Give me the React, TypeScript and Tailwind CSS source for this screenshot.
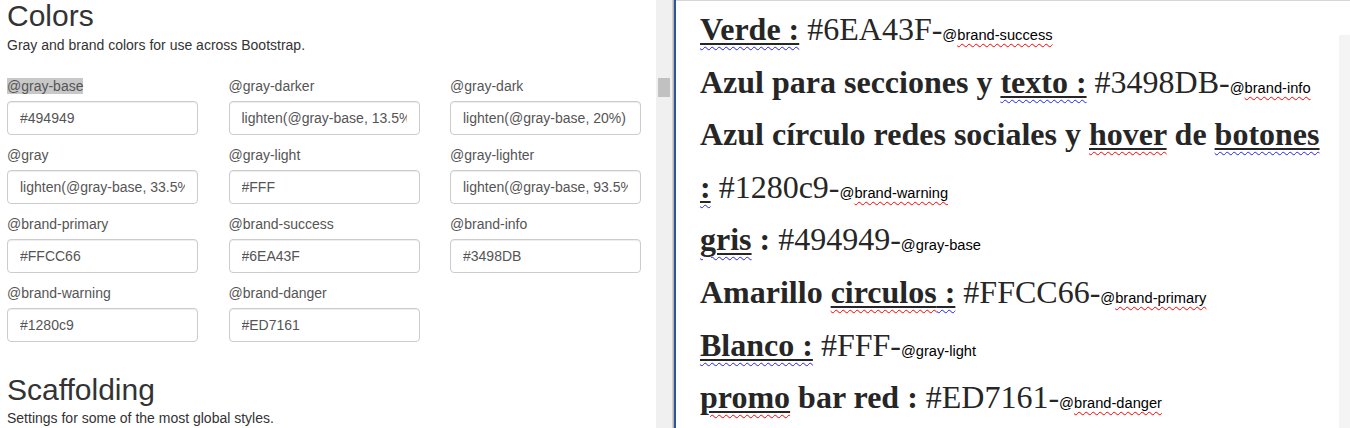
import React from "react";

type Field = { label: string; value: string; selected?: boolean };

const fields: Field[] = [
  { label: "@gray-base", value: "#494949", selected: true },
  { label: "@gray-darker", value: "lighten(@gray-base, 13.5%)" },
  { label: "@gray-dark", value: "lighten(@gray-base, 20%)" },
  { label: "@gray", value: "lighten(@gray-base, 33.5%)" },
  { label: "@gray-light", value: "#FFF" },
  { label: "@gray-lighter", value: "lighten(@gray-base, 93.5%)" },
  { label: "@brand-primary", value: "#FFCC66" },
  { label: "@brand-success", value: "#6EA43F" },
  { label: "@brand-info", value: "#3498DB" },
  { label: "@brand-warning", value: "#1280c9" },
  { label: "@brand-danger", value: "#ED7161" },
];

// solid underline (word's underline)
const U = ({ children }: { children: React.ReactNode }) => (
  <span className="underline decoration-solid decoration-[#262626] decoration-[1.5px] underline-offset-[3px]">
    {children}
  </span>
);

// spell-check squiggles
const Red = ({ children }: { children: React.ReactNode }) => (
  <span className="underline decoration-wavy decoration-[#ff0000] decoration-1 underline-offset-[6px]">
    {children}
  </span>
);

const Blue = ({ children }: { children: React.ReactNode }) => (
  <span className="underline decoration-wavy decoration-[#2020ff] decoration-1 underline-offset-[6px]">
    {children}
  </span>
);

const Small = ({ children }: { children: React.ReactNode }) => (
  <span className="text-[14.67px] leading-none text-black font-normal font-['Liberation_Sans',Arial,sans-serif]">
    {children}
  </span>
);

const SmallRed = ({ children }: { children: React.ReactNode }) => (
  <span className="underline decoration-wavy decoration-[#ff0000] decoration-1 underline-offset-[3px]">
    {children}
  </span>
);

const FormField = ({ field }: { field: Field }) => (
  <div className="mb-[10px]">
    <div className="h-[20px] leading-[20px] text-[14px] text-[#555]">
      <span className={field.selected ? "bg-[#c8c8c8]" : ""}>{field.label}</span>
    </div>
    <input
      readOnly
      defaultValue={field.value}
      className="mt-[5px] block w-full h-[34px] px-3 py-[6px] text-[14px] leading-[20px] text-[#555] bg-white border border-[#ccc] rounded-[4px] shadow-[inset_0_1px_1px_rgba(0,0,0,0.075)] outline-none"
    />
  </div>
);

const Customizer = () => (
  <div className="w-[656px] shrink-0 pl-[7px] font-['Liberation_Sans',Arial,sans-serif] text-[#333]">
    <h1 className="mt-[-1px] text-[30px] leading-[33px] font-normal">Colors</h1>
    <p className="mt-[3px] text-[14px] leading-[20px]">Gray and brand colors for use across Bootstrap.</p>
    <div className="mt-[21px] grid grid-cols-[191px_191px_191px] gap-x-[30.5px]">
      {fields.map((f) => (
        <FormField key={f.label} field={f} />
      ))}
    </div>
    <h1 className="mt-[21px] text-[30px] leading-[33px] font-normal">Scaffolding</h1>
    <p className="mt-[2px] text-[14px] leading-[20px]">Settings for some of the most global styles.</p>
  </div>
);

const WordDoc = () => (
  <div className="flex-1 border-t border-[#d6d6d6] bg-white pl-[24px] pt-[2px] font-['Liberation_Serif','Times_New_Roman',serif] text-[32px] leading-[52.6px] text-[#262626] whitespace-nowrap">
    <p>
      <b><Blue><U>Verde :</U></Blue></b> #6EA43F-<Small>@<SmallRed>brand-success</SmallRed></Small>
    </p>
    <p>
      <b>Azul para secciones y <Blue><U>texto :</U></Blue></b> #3498DB-<Small>@<SmallRed>brand-info</SmallRed></Small>
    </p>
    <p>
      <b>
        Azul círculo redes sociales y <Red><U>hover</U></Red> de <Blue><U>botones </U></Blue>
      </b>
    </p>
    <p>
      <b><Blue><U>:</U></Blue></b> #1280c9-<Small>@<SmallRed>brand-warning</SmallRed></Small>
    </p>
    <p>
      <b><Blue><U>gris</U></Blue> : </b>#494949-<Small>@gray-base</Small>
    </p>
    <p>
      <b>Amarillo <U><Red>circulos</Red><Blue> :</Blue></U></b> #FFCC66-<Small>@<SmallRed>brand-primary</SmallRed></Small>
    </p>
    <p>
      <b><Blue><U>Blanco :</U></Blue></b> #FFF-<Small>@gray-light</Small>
    </p>
    <p>
      <b><Red><U>promo</U></Red> bar red : </b>#ED7161-<Small>@<SmallRed>brand-danger</SmallRed></Small>
    </p>
  </div>
);

export default function App() {
  return (
    <div className="flex w-[1350px] h-[428px] overflow-hidden bg-white">
      <Customizer />
      {/* scrollbar */}
      <div className="w-[16px] shrink-0 bg-[#f0f0f0]">
        <div className="mt-[78px] mx-[2px] h-[19px] bg-[#c1c1c1]" />
      </div>
      <div className="w-[2px] shrink-0 bg-gradient-to-r from-[#e0e0e0] to-[#a8a8a8]" />
      <div className="w-[2px] shrink-0 bg-[#2b579a]" />
      <WordDoc />
      <div className="w-[11px] shrink-0 flex flex-col">
        <div className="h-[35px] bg-white border-t border-[#d6d6d6]" />
        <div className="flex-1 bg-[#f4f4f4]" />
      </div>
    </div>
  );
}
